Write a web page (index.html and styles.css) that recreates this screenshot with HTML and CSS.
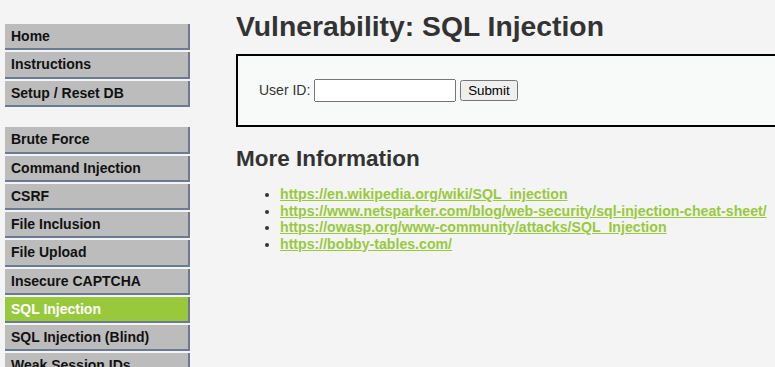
FILE: index.html
```html
<!DOCTYPE html>
<html lang="en">
<head>
    <meta charset="UTF-8">
    <title>Vulnerability: SQL Injection</title>
    <link rel="stylesheet" href="styles.css">
</head>
<body>
    <div class="page">
        <div class="main-menu">
            <ul class="menu-block">
                <li><a href="#">Home</a></li>
                <li><a href="#">Instructions</a></li>
                <li><a href="#">Setup / Reset DB</a></li>
            </ul>
            <ul class="menu-block">
                <li><a href="#">Brute Force</a></li>
                <li><a href="#">Command Injection</a></li>
                <li><a href="#">CSRF</a></li>
                <li><a href="#">File Inclusion</a></li>
                <li><a href="#">File Upload</a></li>
                <li><a href="#">Insecure CAPTCHA</a></li>
                <li class="selected"><a href="#">SQL Injection</a></li>
                <li><a href="#">SQL Injection (Blind)</a></li>
                <li><a href="#">Weak Session IDs</a></li>
                <li><a href="#">XSS (DOM)</a></li>
            </ul>
        </div>

        <div class="main-body">
            <h1>Vulnerability: SQL Injection</h1>

            <div class="vulnerable-code-area">
                <form action="#" method="GET">
                    <label for="uid">User ID:</label>
                    <input type="text" id="uid" name="id">
                    <input type="submit" name="Submit" value="Submit">
                </form>
            </div>

            <h2>More Information</h2>
            <ul class="info-links">
                <li><a href="#">https://en.wikipedia.org/wiki/SQL_injection</a></li>
                <li><a href="#">https://www.netsparker.com/blog/web-security/sql-injection-cheat-sheet/</a></li>
                <li><a href="#">https://owasp.org/www-community/attacks/SQL_Injection</a></li>
                <li><a href="#">https://bobby-tables.com/</a></li>
            </ul>
        </div>
    </div>
</body>
</html>
```

FILE: styles.css
```css
html, body {
    margin: 0;
    overflow: hidden;
}

body {
    background-color: #f4f4f4;
    font-family: "Liberation Sans", Arial, sans-serif;
    font-size: 14px;
    color: #2a2a2a;
}

.page {
    display: flex;
    align-items: flex-start;
}

/* Left menu */
.main-menu {
    flex: 0 0 185px;
    margin: 24px 0 0 5px;
}

.menu-block {
    list-style: none;
    margin: 0 0 20.5px 0;
    padding: 0;
}

.menu-block li a {
    display: block;
    margin-bottom: 2px;
    padding: 4px 0 4px 6px;
    height: 16.25px;
    line-height: 16.25px;
    background-color: #bcbcbc;
    border-right: 2px solid #6d7a93;
    border-bottom: 2px solid #6d7a93;
    color: #111;
    font-weight: bold;
    text-decoration: none;
}

.menu-block li.selected a {
    background-color: #98c93c;
    color: #fff;
}

/* Main content */
.main-body {
    flex: 0 0 600px;
    margin-left: 46px;
}

h1 {
    margin: 9px 0 11px 0;
    font-size: 28.3px;
    line-height: 34px;
    color: #333;
}

.vulnerable-code-area {
    background-color: #f8f9f9;
    border: 2px solid #000;
    padding: 23px 21px 25px 21px;
    height: 21px;
}

.vulnerable-code-area label {
    color: #333;
}

.vulnerable-code-area input[type="text"] {
    width: 134px;
    height: 17px;
    margin: 0;
    font-size: 13px;
}

.vulnerable-code-area input[type="submit"] {
    font-family: "Liberation Sans", Arial, sans-serif;
    font-size: 13.33px;
    height: 21px;
    margin-left: 0;
}

h2 {
    margin: 19px 0 14px 0;
    font-size: 22.5px;
    line-height: 26px;
    color: #333;
}

.info-links {
    margin: 0;
    padding-left: 44px;
}

.info-links li {
    line-height: 16.5px;
    color: #333;
}

.info-links a {
    color: #98c93c;
    font-size: 14.15px;
    font-weight: bold;
}
```
